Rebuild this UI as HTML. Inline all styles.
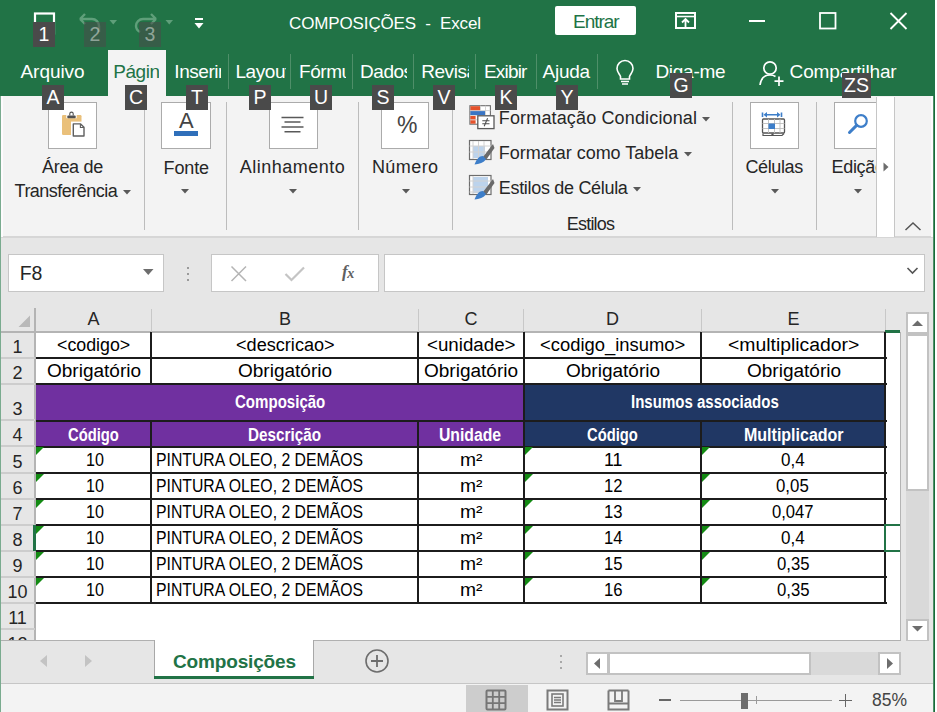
<!DOCTYPE html>
<html><head><meta charset="utf-8"><style>
html,body{margin:0;padding:0;width:937px;height:712px;overflow:hidden;background:#fff}
body{position:relative;font-family:"Liberation Sans",sans-serif}
</style></head><body>
<div style="position:absolute;left:0px;top:0px;width:937px;height:712px;background:#ffffff"></div>
<div style="position:absolute;left:0px;top:0px;width:935px;height:96px;background:#217346"></div>
<div style="position:absolute;left:0px;top:96px;width:935px;height:141px;background:#f3f3f3"></div>
<div style="position:absolute;left:0px;top:236px;width:935px;height:2px;background:#d6d6d6"></div>
<div style="position:absolute;left:0px;top:238px;width:935px;height:403px;background:#e6e6e6"></div>
<div style="position:absolute;left:0px;top:641px;width:935px;height:43px;background:#e6e6e6"></div>
<div style="position:absolute;left:0px;top:684px;width:935px;height:28px;background:#f3f3f3"></div>
<div style="position:absolute;left:0px;top:683px;width:935px;height:1px;background:#c6c6c6"></div>
<svg style="position:absolute;left:30px;top:10px;" width="30" height="30" viewBox="0 0 30 30"><rect x="5" y="3.5" width="19" height="20" fill="none" stroke="#fff" stroke-width="2.2"/></svg>
<div style="position:absolute;left:33px;top:22px;width:22px;height:25px;background:#4a4a4a"></div>
<span style="position:absolute;left:38.60px;top:25.20px;font-size:19.5px;line-height:19.5px;letter-spacing:0.000px;color:#ffffff;white-space:pre;">1</span>
<svg style="position:absolute;left:74px;top:10px;" width="34" height="26" viewBox="0 0 34 26"><path d="M6 9 L11 4 M6 9 L11 14 M6 9 H18 A7 7 0 0 1 25 16 V22" fill="none" stroke="#5f9f7a" stroke-width="2.4"/></svg>
<svg style="position:absolute;left:106px;top:17px;" width="14" height="10" viewBox="0 0 14 10"><path d="M3.5 3 H11 L7.25 7.5Z" fill="#5f9f7a"/></svg>
<svg style="position:absolute;left:128px;top:10px;" width="34" height="26" viewBox="0 0 34 26"><path d="M28 9 L23 4 M28 9 L23 14 M28 9 H15 A7 7 0 0 0 8 16 A7 7 0 0 0 12 22" fill="none" stroke="#5f9f7a" stroke-width="2.4"/></svg>
<svg style="position:absolute;left:162px;top:17px;" width="14" height="10" viewBox="0 0 14 10"><path d="M3.5 3 H11 L7.25 7.5Z" fill="#5f9f7a"/></svg>
<div style="position:absolute;left:84px;top:22px;width:22px;height:25px;background:rgba(75,75,75,0.55)"></div>
<span style="position:absolute;left:89.60px;top:25.20px;font-size:19.5px;line-height:19.5px;letter-spacing:0.000px;color:rgba(255,255,255,0.45);white-space:pre;">2</span>
<div style="position:absolute;left:139px;top:22px;width:22px;height:25px;background:rgba(75,75,75,0.55)"></div>
<span style="position:absolute;left:144.60px;top:25.20px;font-size:19.5px;line-height:19.5px;letter-spacing:0.000px;color:rgba(255,255,255,0.45);white-space:pre;">3</span>
<svg style="position:absolute;left:192px;top:15px;" width="14" height="16" viewBox="0 0 14 16"><rect x="3" y="3" width="8" height="2" fill="#fff"/><path d="M2.5 8 H11.5 L7 13.5Z" fill="#fff"/></svg>
<span style="position:absolute;left:289.00px;top:14.61px;font-size:17px;line-height:17px;letter-spacing:-0.130px;color:#ffffff;white-space:pre;">COMPOSIÇÕES  -  Excel</span>
<div style="position:absolute;left:555px;top:6px;width:81px;height:29px;background:#fff;border-radius:2px"></div>
<span style="position:absolute;left:573.00px;top:12.21px;font-size:19px;line-height:19px;letter-spacing:-1.040px;color:#217346;white-space:pre;">Entrar</span>
<svg style="position:absolute;left:672px;top:9px;" width="28" height="24" viewBox="0 0 28 24"><rect x="4" y="4" width="19" height="15" fill="none" stroke="#fff" stroke-width="2"/><path d="M4 7.5 H23" stroke="#fff" stroke-width="1.6"/><path d="M13.5 18 V10.5 M10 13.5 L13.5 10 L17 13.5" fill="none" stroke="#fff" stroke-width="1.8"/></svg>
<div style="position:absolute;left:749px;top:20px;width:16px;height:2px;background:#fff"></div>
<svg style="position:absolute;left:815px;top:8px;" width="26" height="26" viewBox="0 0 26 26"><rect x="5" y="5" width="15.5" height="15.5" fill="none" stroke="#fff" stroke-width="1.8"/></svg>
<svg style="position:absolute;left:886px;top:8px;" width="26" height="26" viewBox="0 0 26 26"><path d="M4.5 5 L20.5 21 M20.5 5 L4.5 21" stroke="#fff" stroke-width="1.8"/></svg>
<div style="position:absolute;left:108px;top:50px;width:58px;height:46px;background:#f3f3f3"></div>
<span style="position:absolute;left:20.50px;top:62.41px;font-size:19px;line-height:19px;letter-spacing:-0.050px;color:#ffffff;white-space:pre;">Arquivo</span>
<div style="position:absolute;left:0;top:50px;width:159px;height:46px;overflow:hidden">
<span style="position:absolute;left:113.20px;top:12.41px;font-size:19px;line-height:19px;letter-spacing:-0.45px;color:#217346;white-space:pre">Página Inicial</span>
</div>
<div style="position:absolute;left:0;top:50px;width:221px;height:46px;overflow:hidden">
<span style="position:absolute;left:174.30px;top:12.41px;font-size:19px;line-height:19px;letter-spacing:-0.45px;color:#ffffff;white-space:pre">Inserir</span>
</div>
<div style="position:absolute;left:0;top:50px;width:286px;height:46px;overflow:hidden">
<span style="position:absolute;left:235.50px;top:12.41px;font-size:19px;line-height:19px;letter-spacing:-0.45px;color:#ffffff;white-space:pre">Layout da Página</span>
</div>
<div style="position:absolute;left:0;top:50px;width:346px;height:46px;overflow:hidden">
<span style="position:absolute;left:299.00px;top:12.41px;font-size:19px;line-height:19px;letter-spacing:-0.45px;color:#ffffff;white-space:pre">Fórmulas</span>
</div>
<div style="position:absolute;left:0;top:50px;width:407px;height:46px;overflow:hidden">
<span style="position:absolute;left:360.00px;top:12.41px;font-size:19px;line-height:19px;letter-spacing:-0.45px;color:#ffffff;white-space:pre">Dados</span>
</div>
<div style="position:absolute;left:0;top:50px;width:469px;height:46px;overflow:hidden">
<span style="position:absolute;left:421.20px;top:12.41px;font-size:19px;line-height:19px;letter-spacing:-0.45px;color:#ffffff;white-space:pre">Revisão</span>
</div>
<span style="position:absolute;left:484.00px;top:62.41px;font-size:19px;line-height:19px;letter-spacing:-0.820px;color:#ffffff;white-space:pre;">Exibir</span>
<span style="position:absolute;left:542.60px;top:62.41px;font-size:19px;line-height:19px;letter-spacing:-0.300px;color:#ffffff;white-space:pre;">Ajuda</span>
<div style="position:absolute;left:228px;top:54px;width:1px;height:35px;background:#4f8f69"></div>
<div style="position:absolute;left:290px;top:54px;width:1px;height:35px;background:#4f8f69"></div>
<div style="position:absolute;left:352px;top:54px;width:1px;height:35px;background:#4f8f69"></div>
<div style="position:absolute;left:413px;top:54px;width:1px;height:35px;background:#4f8f69"></div>
<div style="position:absolute;left:475px;top:54px;width:1px;height:35px;background:#4f8f69"></div>
<div style="position:absolute;left:536px;top:54px;width:1px;height:35px;background:#4f8f69"></div>
<div style="position:absolute;left:597px;top:54px;width:1px;height:35px;background:#4f8f69"></div>
<svg style="position:absolute;left:610px;top:56px;" width="30" height="32" viewBox="0 0 30 32"><path d="M15 4.5 A8 8 0 0 1 23 12.5 C23 16 20.5 18 19.5 20.5 V23 H10.5 V20.5 C9.5 18 7 16 7 12.5 A8 8 0 0 1 15 4.5Z" fill="none" stroke="#fff" stroke-width="1.6"/><path d="M11 25.5 H19 M12 28 H18" stroke="#fff" stroke-width="1.6"/></svg>
<span style="position:absolute;left:655.40px;top:62.41px;font-size:19px;line-height:19px;letter-spacing:-0.267px;color:#ffffff;white-space:pre;">Diga-me</span>
<svg style="position:absolute;left:756px;top:58px;" width="32" height="30" viewBox="0 0 32 30"><circle cx="14" cy="10" r="6.2" fill="none" stroke="#fff" stroke-width="1.7"/><path d="M4 27 C5 20 9 17 14 17 C16 17 18 17.5 19.5 18.5" fill="none" stroke="#fff" stroke-width="1.7"/><path d="M23 18.5 V28 M18.5 23.2 H27.5" stroke="#fff" stroke-width="1.7"/></svg>
<span style="position:absolute;left:789.60px;top:62.41px;font-size:19px;line-height:19px;letter-spacing:-0.155px;color:#ffffff;white-space:pre;">Compartilhar</span>
<div style="position:absolute;left:144px;top:102px;width:1px;height:128px;background:#bcbcbc"></div>
<div style="position:absolute;left:226px;top:102px;width:1px;height:128px;background:#bcbcbc"></div>
<div style="position:absolute;left:358px;top:102px;width:1px;height:128px;background:#bcbcbc"></div>
<div style="position:absolute;left:452px;top:102px;width:1px;height:128px;background:#bcbcbc"></div>
<div style="position:absolute;left:732px;top:102px;width:1px;height:128px;background:#bcbcbc"></div>
<div style="position:absolute;left:816px;top:102px;width:1px;height:128px;background:#bcbcbc"></div>
<div style="position:absolute;left:48px;top:102px;width:49px;height:47px;background:#fff;border:1px solid #ababab;box-sizing:border-box"></div>
<svg style="position:absolute;left:58px;top:110px;" width="30" height="30" viewBox="0 0 30 30"><rect x="4" y="5" width="19.5" height="20" rx="1.2" fill="#eac07a"/><rect x="8.3" y="4" width="10.4" height="4.2" fill="#fff"/><rect x="9.3" y="5.6" width="8.4" height="2.6" rx="0.8" fill="#505050"/><path d="M11.8 5.6 V3.8 A1.7 1.7 0 0 1 15.2 3.8 V5.6" fill="none" stroke="#505050" stroke-width="1.1"/><rect x="13" y="11.6" width="15" height="17" fill="#fff"/><path d="M15.3 13.9 H22.6 L26 17.3 V26 H15.3Z" fill="#fff" stroke="#5f5f5f" stroke-width="1.4" stroke-linejoin="round"/><path d="M22.4 14 V17.5 H26" fill="none" stroke="#5f5f5f" stroke-width="1.1"/></svg>
<span style="position:absolute;left:42.00px;top:158.36px;font-size:18px;line-height:18px;letter-spacing:-0.300px;color:#262626;white-space:pre;">Área de</span>
<span style="position:absolute;left:14.60px;top:181.56px;font-size:18px;line-height:18px;letter-spacing:-0.525px;color:#262626;white-space:pre;">Transferência</span>
<svg style="position:absolute;left:122.3px;top:189px;" width="10" height="6.5" viewBox="0 0 10 6.5"><path d="M1 1 H9 L5.0 5.5Z" fill="#595959"/></svg>
<div style="position:absolute;left:161px;top:102px;width:50px;height:47px;background:#fff;border:1px solid #ababab;box-sizing:border-box"></div>
<span style="position:absolute;left:179.00px;top:110.37px;font-size:22px;line-height:22px;letter-spacing:0.000px;color:#444444;white-space:pre;">A</span>
<div style="position:absolute;left:174px;top:131px;width:24px;height:5px;background:#2f6fba"></div>
<span style="position:absolute;left:163.60px;top:158.76px;font-size:18px;line-height:18px;letter-spacing:-0.125px;color:#262626;white-space:pre;">Fonte</span>
<svg style="position:absolute;left:180.3px;top:188px;" width="10" height="6.5" viewBox="0 0 10 6.5"><path d="M1 1 H9 L5.0 5.5Z" fill="#595959"/></svg>
<div style="position:absolute;left:269px;top:102px;width:49px;height:47px;background:#fff;border:1px solid #ababab;box-sizing:border-box"></div>
<svg style="position:absolute;left:279px;top:114px;" width="28" height="22" viewBox="0 0 28 22"><path d="M2.5 3.5 H24.5 M5.5 8 H21.5 M2.5 13 H24.5 M5.5 17.8 H21.5" stroke="#595959" stroke-width="1.6"/></svg>
<span style="position:absolute;left:239.80px;top:158.26px;font-size:18px;line-height:18px;letter-spacing:0.500px;color:#262626;white-space:pre;">Alinhamento</span>
<svg style="position:absolute;left:287.6px;top:188px;" width="10" height="6.5" viewBox="0 0 10 6.5"><path d="M1 1 H9 L5.0 5.5Z" fill="#595959"/></svg>
<div style="position:absolute;left:381px;top:102px;width:48px;height:47px;background:#fff;border:1px solid #ababab;box-sizing:border-box"></div>
<span style="position:absolute;left:397.00px;top:114.03px;font-size:23px;line-height:23px;letter-spacing:0.000px;color:#444444;white-space:pre;">%</span>
<span style="position:absolute;left:371.90px;top:158.26px;font-size:18px;line-height:18px;letter-spacing:0.440px;color:#262626;white-space:pre;">Número</span>
<svg style="position:absolute;left:401.1px;top:188px;" width="10" height="6.5" viewBox="0 0 10 6.5"><path d="M1 1 H9 L5.0 5.5Z" fill="#595959"/></svg>
<svg style="position:absolute;left:466px;top:102px;" width="32" height="30" viewBox="0 0 32 30"><rect x="3.9" y="3.7" width="20.5" height="18.5" fill="#fff" stroke="#6d6d6d" stroke-width="1.1"/><path d="M14.5 3.7 V22 M19.5 3.7 V13 M3.9 8.6 H24.4 M3.9 13.4 H24.4 M3.9 17.8 H12" stroke="#cfcfcf" stroke-width="0.9"/><rect x="4.4" y="4.2" width="9.6" height="4" fill="#e5512a"/><rect x="4.4" y="9.1" width="14.6" height="3.9" fill="#3a75c4"/><rect x="4.4" y="14" width="5.2" height="3.4" fill="#e5512a"/><rect x="4.4" y="18.3" width="5.2" height="3.4" fill="#e5512a"/><rect x="11.8" y="13.8" width="16.2" height="12.8" fill="#fff" stroke="#5a5a5a" stroke-width="1.3"/><path d="M16.3 18.8 H23.5 M16.3 21.8 H23.5 M21.6 16.3 L18.2 24.3" stroke="#505050" stroke-width="1.1"/></svg>
<svg style="position:absolute;left:466px;top:137px;" width="32" height="30" viewBox="0 0 32 30"><rect x="3.5" y="3.5" width="21.5" height="19" fill="#fff" stroke="#6d6d6d" stroke-width="1.2"/><rect x="7" y="9" width="12" height="12" fill="#bcd3ec"/><path d="M7 4 V22 M12.5 4 V22 M18 4 V22 M3.5 9 H25 M3.5 15 H25" stroke="#d2d2d2" stroke-width="1"/><path d="M27 7 L17 20 L20 23 L28.5 11Z" fill="#6a6a6a"/><path d="M17 19 C12 19 10 24 8.5 27.5 C13 27 18 26 20 22Z" fill="#3d7ec9"/></svg>
<svg style="position:absolute;left:466px;top:172px;" width="32" height="30" viewBox="0 0 32 30"><rect x="3.5" y="3.5" width="21.5" height="19" fill="#fff" stroke="#6d6d6d" stroke-width="1.2"/><rect x="7" y="5" width="15" height="16" fill="#bcd3ec"/><path d="M7 4 V22 M3.5 9 H25 M3.5 15 H22 M3.5 20 H20" stroke="#d2d2d2" stroke-width="1"/><path d="M27 7 L17 20 L20 23 L28.5 11Z" fill="#6a6a6a"/><path d="M17 19 C12 19 10 24 8.5 27.5 C13 27 18 26 20 22Z" fill="#3d7ec9"/></svg>
<span style="position:absolute;left:498.80px;top:109.46px;font-size:18px;line-height:18px;letter-spacing:0.148px;color:#262626;white-space:pre;">Formatação Condicional</span>
<svg style="position:absolute;left:701.4px;top:115.5px;" width="10" height="6.5" viewBox="0 0 10 6.5"><path d="M1 1 H9 L5.0 5.5Z" fill="#595959"/></svg>
<span style="position:absolute;left:498.80px;top:143.76px;font-size:18px;line-height:18px;letter-spacing:-0.016px;color:#262626;white-space:pre;">Formatar como Tabela</span>
<svg style="position:absolute;left:682.6px;top:151px;" width="10" height="6.5" viewBox="0 0 10 6.5"><path d="M1 1 H9 L5.0 5.5Z" fill="#595959"/></svg>
<span style="position:absolute;left:498.80px;top:179.16px;font-size:18px;line-height:18px;letter-spacing:-0.312px;color:#262626;white-space:pre;">Estilos de Célula</span>
<svg style="position:absolute;left:632.3px;top:186px;" width="10" height="6.5" viewBox="0 0 10 6.5"><path d="M1 1 H9 L5.0 5.5Z" fill="#595959"/></svg>
<span style="position:absolute;left:566.80px;top:214.66px;font-size:18px;line-height:18px;letter-spacing:-0.800px;color:#262626;white-space:pre;">Estilos</span>
<div style="position:absolute;left:750px;top:102px;width:49px;height:47px;background:#fff;border:1px solid #ababab;box-sizing:border-box"></div>
<svg style="position:absolute;left:758px;top:110px;" width="32" height="30" viewBox="0 0 32 30"><path d="M4.5 2.5 V7 M23.5 2.5 V7 M7 4.75 H21" stroke="#3d7ec9" stroke-width="1.6"/><path d="M5.5 4.75 L9 2 V7.5Z M22.5 4.75 L19 2 V7.5Z" fill="#3d7ec9"/><rect x="4.5" y="9" width="22" height="14" rx="1" fill="#fff" stroke="#555" stroke-width="1.3"/><path d="M10.5 9 V23 M16.5 9 V23 M22 9 V23 M4.5 13.5 H26.5 M4.5 18.5 H26.5" stroke="#bdbdbd" stroke-width="0.9"/><rect x="10.5" y="13.5" width="6.5" height="5.5" fill="#3d7ec9"/><path d="M5 23.5 V25.5 H14 V23.5 M15 23.5 V25.5 H24 L26 23.5" fill="none" stroke="#555" stroke-width="1.2"/></svg>
<span style="position:absolute;left:745.50px;top:157.76px;font-size:18px;line-height:18px;letter-spacing:-0.383px;color:#262626;white-space:pre;">Células</span>
<svg style="position:absolute;left:769.8px;top:188px;" width="10" height="6.5" viewBox="0 0 10 6.5"><path d="M1 1 H9 L5.0 5.5Z" fill="#595959"/></svg>
<div style="position:absolute;left:820px;top:96px;width:56px;height:140px;overflow:hidden">
<div style="position:absolute;left:14px;top:6px;width:49px;height:47px;background:#fff;border:1px solid #ababab;box-sizing:border-box"></div>
<svg style="position:absolute;left:24px;top:16px" width="30" height="26" viewBox="0 0 30 26"><circle cx="17" cy="9" r="5.8" fill="none" stroke="#3d7ec9" stroke-width="2.2"/><path d="M12.6 13.4 L5.5 20.5" stroke="#3d7ec9" stroke-width="3" stroke-linecap="round"/></svg>
<span style="position:absolute;left:11.50px;top:62.06px;font-size:18px;line-height:18px;letter-spacing:-0.3px;color:#262626;white-space:pre">Edição</span>
</div>
<svg style="position:absolute;left:852.8px;top:188px;" width="10" height="6.5" viewBox="0 0 10 6.5"><path d="M1 1 H9 L5.0 5.5Z" fill="#595959"/></svg>
<div style="position:absolute;left:876px;top:97px;width:19px;height:140px;background:#fff;border-left:1px solid #c6c6c6;border-right:1px solid #c6c6c6;box-sizing:border-box"></div>
<svg style="position:absolute;left:881px;top:161px;" width="10" height="12" viewBox="0 0 10 12"><path d="M2.5 1.5 V10.5 L7.5 6Z" fill="#6d6d6d"/></svg>
<svg style="position:absolute;left:903px;top:220px;" width="20" height="12" viewBox="0 0 20 12"><path d="M2.5 10 L10 3 L17.5 10" fill="none" stroke="#555" stroke-width="1.5"/></svg>
<div style="position:absolute;left:42px;top:85px;width:22px;height:25px;background:#4a4a4a"></div>
<span style="position:absolute;left:46.50px;top:88.20px;font-size:19.5px;line-height:19.5px;letter-spacing:0.000px;color:#ffffff;white-space:pre;">A</span>
<div style="position:absolute;left:125px;top:85px;width:22px;height:25px;background:#4a4a4a"></div>
<span style="position:absolute;left:128.95px;top:88.20px;font-size:19.5px;line-height:19.5px;letter-spacing:0.000px;color:#ffffff;white-space:pre;">C</span>
<div style="position:absolute;left:186px;top:85px;width:22px;height:25px;background:#4a4a4a"></div>
<span style="position:absolute;left:191.05px;top:88.20px;font-size:19.5px;line-height:19.5px;letter-spacing:0.000px;color:#ffffff;white-space:pre;">T</span>
<div style="position:absolute;left:249px;top:85px;width:22px;height:25px;background:#4a4a4a"></div>
<span style="position:absolute;left:253.50px;top:88.20px;font-size:19.5px;line-height:19.5px;letter-spacing:0.000px;color:#ffffff;white-space:pre;">P</span>
<div style="position:absolute;left:310px;top:85px;width:22px;height:25px;background:#4a4a4a"></div>
<span style="position:absolute;left:313.95px;top:88.20px;font-size:19.5px;line-height:19.5px;letter-spacing:0.000px;color:#ffffff;white-space:pre;">U</span>
<div style="position:absolute;left:372px;top:85px;width:22px;height:25px;background:#4a4a4a"></div>
<span style="position:absolute;left:376.50px;top:88.20px;font-size:19.5px;line-height:19.5px;letter-spacing:0.000px;color:#ffffff;white-space:pre;">S</span>
<div style="position:absolute;left:433px;top:85px;width:22px;height:25px;background:#4a4a4a"></div>
<span style="position:absolute;left:437.50px;top:88.20px;font-size:19.5px;line-height:19.5px;letter-spacing:0.000px;color:#ffffff;white-space:pre;">V</span>
<div style="position:absolute;left:495px;top:85px;width:22px;height:25px;background:#4a4a4a"></div>
<span style="position:absolute;left:499.50px;top:88.20px;font-size:19.5px;line-height:19.5px;letter-spacing:0.000px;color:#ffffff;white-space:pre;">K</span>
<div style="position:absolute;left:556px;top:85px;width:22px;height:25px;background:#4a4a4a"></div>
<span style="position:absolute;left:560.50px;top:88.20px;font-size:19.5px;line-height:19.5px;letter-spacing:0.000px;color:#ffffff;white-space:pre;">Y</span>
<div style="position:absolute;left:670px;top:73px;width:22px;height:25px;background:#4a4a4a"></div>
<span style="position:absolute;left:673.40px;top:76.20px;font-size:19.5px;line-height:19.5px;letter-spacing:0.000px;color:#ffffff;white-space:pre;">G</span>
<div style="position:absolute;left:842px;top:73px;width:29px;height:25px;background:#4a4a4a"></div>
<span style="position:absolute;left:844.05px;top:76.20px;font-size:19.5px;line-height:19.5px;letter-spacing:0.000px;color:#ffffff;white-space:pre;">ZS</span>
<div style="position:absolute;left:8px;top:254px;width:156px;height:38px;background:#fff;border:1px solid #c6c6c6;box-sizing:border-box"></div>
<span style="position:absolute;left:19.70px;top:264.49px;font-size:19.5px;line-height:19.5px;letter-spacing:0.000px;color:#262626;white-space:pre;">F8</span>
<svg style="position:absolute;left:142.05px;top:267.5px;" width="12.5" height="8" viewBox="0 0 12.5 8"><path d="M1 1 H11.5 L6.25 7Z" fill="#6d6d6d"/></svg>
<div style="position:absolute;left:187px;top:267px;width:2px;height:2px;background:#9a9a9a"></div>
<div style="position:absolute;left:187px;top:273px;width:2px;height:2px;background:#9a9a9a"></div>
<div style="position:absolute;left:187px;top:279px;width:2px;height:2px;background:#9a9a9a"></div>
<div style="position:absolute;left:211px;top:254px;width:168px;height:38px;background:#fff;border:1px solid #c6c6c6;box-sizing:border-box"></div>
<svg style="position:absolute;left:228px;top:263px;" width="24" height="22" viewBox="0 0 24 22"><path d="M3.5 3.5 L18 18 M18 3.5 L3.5 18" stroke="#b4b4b4" stroke-width="1.5"/></svg>
<svg style="position:absolute;left:282px;top:263px;" width="26" height="22" viewBox="0 0 26 22"><path d="M3.5 11 L9.5 17 L22 4.5" fill="none" stroke="#c4c4c4" stroke-width="2.2"/></svg>
<span style="position:absolute;left:342px;top:263px;font-family:'Liberation Serif',serif;font-style:italic;font-weight:bold;font-size:17px;line-height:17px;color:#606060;letter-spacing:-0.5px">f<span style="font-size:14px;position:relative;top:1px">x</span></span>
<div style="position:absolute;left:384px;top:254px;width:541px;height:38px;background:#fff;border:1px solid #c6c6c6;box-sizing:border-box"></div>
<svg style="position:absolute;left:905px;top:264px;" width="16" height="14" viewBox="0 0 16 14"><path d="M2.5 4 L7.5 9 L12.5 4" fill="none" stroke="#555" stroke-width="1.6"/></svg>
<div style="position:absolute;left:36px;top:333px;width:864px;height:308px;background:#fff"></div>
<div style="position:absolute;left:0px;top:308px;width:900px;height:24px;background:#e6e6e6"></div>
<div style="position:absolute;left:1px;top:332px;width:34px;height:309px;background:#e6e6e6"></div>
<div style="position:absolute;left:0px;top:331px;width:900px;height:2px;background:#b4b4b4"></div>
<div style="position:absolute;left:34px;top:308px;width:2px;height:333px;background:#b4b4b4"></div>
<div style="position:absolute;left:151px;top:309px;width:1px;height:23px;background:#c8c8c8"></div>
<div style="position:absolute;left:418px;top:309px;width:1px;height:23px;background:#c8c8c8"></div>
<div style="position:absolute;left:523px;top:309px;width:1px;height:23px;background:#c8c8c8"></div>
<div style="position:absolute;left:701px;top:309px;width:1px;height:23px;background:#c8c8c8"></div>
<div style="position:absolute;left:885px;top:309px;width:1px;height:23px;background:#c8c8c8"></div>
<div style="position:absolute;left:1px;top:357px;width:34px;height:2px;background:#cdcdcd"></div>
<div style="position:absolute;left:1px;top:383px;width:34px;height:2px;background:#cdcdcd"></div>
<div style="position:absolute;left:1px;top:419px;width:34px;height:2px;background:#cdcdcd"></div>
<div style="position:absolute;left:1px;top:445px;width:34px;height:2px;background:#cdcdcd"></div>
<div style="position:absolute;left:1px;top:472px;width:34px;height:2px;background:#cdcdcd"></div>
<div style="position:absolute;left:1px;top:498px;width:34px;height:2px;background:#cdcdcd"></div>
<div style="position:absolute;left:1px;top:524px;width:34px;height:2px;background:#cdcdcd"></div>
<div style="position:absolute;left:1px;top:550px;width:34px;height:2px;background:#cdcdcd"></div>
<div style="position:absolute;left:1px;top:576px;width:34px;height:2px;background:#cdcdcd"></div>
<div style="position:absolute;left:1px;top:602px;width:34px;height:2px;background:#cdcdcd"></div>
<div style="position:absolute;left:1px;top:628px;width:34px;height:2px;background:#cdcdcd"></div>
<svg style="position:absolute;left:16px;top:313px;" width="16" height="16" viewBox="0 0 16 16"><path d="M14 2.5 V14 H2.5Z" fill="#b9b9b9"/></svg>
<span style="position:absolute;left:87.50px;top:310.36px;font-size:18px;line-height:18px;letter-spacing:0.000px;color:#262626;white-space:pre;">A</span>
<span style="position:absolute;left:279.00px;top:310.36px;font-size:18px;line-height:18px;letter-spacing:0.000px;color:#262626;white-space:pre;">B</span>
<span style="position:absolute;left:464.50px;top:310.36px;font-size:18px;line-height:18px;letter-spacing:0.000px;color:#262626;white-space:pre;">C</span>
<span style="position:absolute;left:606.00px;top:310.36px;font-size:18px;line-height:18px;letter-spacing:0.000px;color:#262626;white-space:pre;">D</span>
<span style="position:absolute;left:787.50px;top:310.36px;font-size:18px;line-height:18px;letter-spacing:0.000px;color:#262626;white-space:pre;">E</span>
<div style="position:absolute;left:885px;top:330px;width:15px;height:3px;background:#217346"></div>
<span style="position:absolute;left:12.50px;top:337.56px;font-size:18px;line-height:18px;letter-spacing:0.000px;color:#262626;white-space:pre;">1</span>
<span style="position:absolute;left:12.50px;top:363.76px;font-size:18px;line-height:18px;letter-spacing:0.000px;color:#262626;white-space:pre;">2</span>
<span style="position:absolute;left:12.50px;top:400.06px;font-size:18px;line-height:18px;letter-spacing:0.000px;color:#262626;white-space:pre;">3</span>
<span style="position:absolute;left:12.50px;top:426.06px;font-size:18px;line-height:18px;letter-spacing:0.000px;color:#262626;white-space:pre;">4</span>
<span style="position:absolute;left:12.50px;top:452.56px;font-size:18px;line-height:18px;letter-spacing:0.000px;color:#262626;white-space:pre;">5</span>
<span style="position:absolute;left:12.50px;top:478.56px;font-size:18px;line-height:18px;letter-spacing:0.000px;color:#262626;white-space:pre;">6</span>
<span style="position:absolute;left:12.50px;top:504.56px;font-size:18px;line-height:18px;letter-spacing:0.000px;color:#262626;white-space:pre;">7</span>
<span style="position:absolute;left:12.50px;top:530.56px;font-size:18px;line-height:18px;letter-spacing:0.000px;color:#262626;white-space:pre;">8</span>
<span style="position:absolute;left:12.50px;top:556.56px;font-size:18px;line-height:18px;letter-spacing:0.000px;color:#262626;white-space:pre;">9</span>
<span style="position:absolute;left:7.50px;top:582.76px;font-size:18px;line-height:18px;letter-spacing:0.000px;color:#262626;white-space:pre;">10</span>
<span style="position:absolute;left:8.15px;top:608.76px;font-size:18px;line-height:18px;letter-spacing:0.000px;color:#262626;white-space:pre;">11</span>
<span style="position:absolute;left:7.50px;top:634.56px;font-size:18px;line-height:18px;letter-spacing:0.000px;color:#262626;white-space:pre;">12</span>
<div style="position:absolute;left:33px;top:525px;width:3px;height:26px;background:#217346"></div>
<div style="position:absolute;left:36px;top:385px;width:488px;height:62px;background:#7030a0"></div>
<div style="position:absolute;left:524px;top:385px;width:362px;height:62px;background:#203764"></div>
<div style="position:absolute;left:150px;top:332px;width:2px;height:272px;background:#1c1c1c"></div>
<div style="position:absolute;left:417px;top:332px;width:2px;height:272px;background:#1c1c1c"></div>
<div style="position:absolute;left:523px;top:332px;width:2px;height:272px;background:#1c1c1c"></div>
<div style="position:absolute;left:700px;top:332px;width:2px;height:272px;background:#1c1c1c"></div>
<div style="position:absolute;left:884px;top:332px;width:2px;height:272px;background:#1c1c1c"></div>
<div style="position:absolute;left:36px;top:357px;width:851px;height:2px;background:#1c1c1c"></div>
<div style="position:absolute;left:36px;top:383px;width:851px;height:2px;background:#1c1c1c"></div>
<div style="position:absolute;left:36px;top:420px;width:851px;height:2px;background:#1c1c1c"></div>
<div style="position:absolute;left:36px;top:446px;width:851px;height:2px;background:#1c1c1c"></div>
<div style="position:absolute;left:36px;top:472px;width:851px;height:2px;background:#1c1c1c"></div>
<div style="position:absolute;left:36px;top:498px;width:851px;height:2px;background:#1c1c1c"></div>
<div style="position:absolute;left:36px;top:524px;width:851px;height:2px;background:#1c1c1c"></div>
<div style="position:absolute;left:36px;top:550px;width:851px;height:2px;background:#1c1c1c"></div>
<div style="position:absolute;left:36px;top:576px;width:851px;height:2px;background:#1c1c1c"></div>
<div style="position:absolute;left:36px;top:602px;width:851px;height:2px;background:#1c1c1c"></div>
<div style="position:absolute;left:36px;top:385px;width:486px;height:35px;background:#7030a0"></div>
<div style="position:absolute;left:525px;top:385px;width:359px;height:35px;background:#203764"></div>
<div style="position:absolute;left:884px;top:524px;width:16px;height:2px;background:#217346"></div>
<div style="position:absolute;left:884px;top:550px;width:16px;height:2px;background:#217346"></div>
<div style="position:absolute;left:884px;top:524px;width:2px;height:28px;background:#217346"></div>
<svg style="position:absolute;left:525px;top:447px;" width="9" height="9" viewBox="0 0 9 9"><path d="M0 0 H8 L0 8Z" fill="#138a13"/></svg>
<svg style="position:absolute;left:702px;top:447px;" width="9" height="9" viewBox="0 0 9 9"><path d="M0 0 H8 L0 8Z" fill="#138a13"/></svg>
<svg style="position:absolute;left:36px;top:447px;" width="9" height="9" viewBox="0 0 9 9"><path d="M0 0 H8 L0 8Z" fill="#138a13"/></svg>
<svg style="position:absolute;left:525px;top:474px;" width="9" height="9" viewBox="0 0 9 9"><path d="M0 0 H8 L0 8Z" fill="#138a13"/></svg>
<svg style="position:absolute;left:702px;top:474px;" width="9" height="9" viewBox="0 0 9 9"><path d="M0 0 H8 L0 8Z" fill="#138a13"/></svg>
<svg style="position:absolute;left:36px;top:474px;" width="9" height="9" viewBox="0 0 9 9"><path d="M0 0 H8 L0 8Z" fill="#138a13"/></svg>
<svg style="position:absolute;left:525px;top:500px;" width="9" height="9" viewBox="0 0 9 9"><path d="M0 0 H8 L0 8Z" fill="#138a13"/></svg>
<svg style="position:absolute;left:702px;top:500px;" width="9" height="9" viewBox="0 0 9 9"><path d="M0 0 H8 L0 8Z" fill="#138a13"/></svg>
<svg style="position:absolute;left:36px;top:500px;" width="9" height="9" viewBox="0 0 9 9"><path d="M0 0 H8 L0 8Z" fill="#138a13"/></svg>
<svg style="position:absolute;left:525px;top:526px;" width="9" height="9" viewBox="0 0 9 9"><path d="M0 0 H8 L0 8Z" fill="#138a13"/></svg>
<svg style="position:absolute;left:702px;top:526px;" width="9" height="9" viewBox="0 0 9 9"><path d="M0 0 H8 L0 8Z" fill="#138a13"/></svg>
<svg style="position:absolute;left:36px;top:526px;" width="9" height="9" viewBox="0 0 9 9"><path d="M0 0 H8 L0 8Z" fill="#138a13"/></svg>
<svg style="position:absolute;left:525px;top:552px;" width="9" height="9" viewBox="0 0 9 9"><path d="M0 0 H8 L0 8Z" fill="#138a13"/></svg>
<svg style="position:absolute;left:702px;top:552px;" width="9" height="9" viewBox="0 0 9 9"><path d="M0 0 H8 L0 8Z" fill="#138a13"/></svg>
<svg style="position:absolute;left:36px;top:552px;" width="9" height="9" viewBox="0 0 9 9"><path d="M0 0 H8 L0 8Z" fill="#138a13"/></svg>
<svg style="position:absolute;left:525px;top:578px;" width="9" height="9" viewBox="0 0 9 9"><path d="M0 0 H8 L0 8Z" fill="#138a13"/></svg>
<svg style="position:absolute;left:702px;top:578px;" width="9" height="9" viewBox="0 0 9 9"><path d="M0 0 H8 L0 8Z" fill="#138a13"/></svg>
<svg style="position:absolute;left:36px;top:578px;" width="9" height="9" viewBox="0 0 9 9"><path d="M0 0 H8 L0 8Z" fill="#138a13"/></svg>
<span style="position:absolute;left:57.40px;top:336.16px;font-size:18px;line-height:18px;letter-spacing:0.000px;transform:scaleX(0.9879);transform-origin:0 0;color:#000000;white-space:pre;">&lt;codigo&gt;</span>
<span style="position:absolute;left:236.00px;top:336.16px;font-size:18px;line-height:18px;letter-spacing:0.000px;transform:scaleX(1.0061);transform-origin:0 0;color:#000000;white-space:pre;">&lt;descricao&gt;</span>
<span style="position:absolute;left:426.60px;top:336.16px;font-size:18px;line-height:18px;letter-spacing:0.000px;transform:scaleX(1.0400);transform-origin:0 0;color:#000000;white-space:pre;">&lt;unidade&gt;</span>
<span style="position:absolute;left:540.40px;top:336.16px;font-size:18px;line-height:18px;letter-spacing:0.000px;transform:scaleX(1.0218);transform-origin:0 0;color:#000000;white-space:pre;">&lt;codigo_insumo&gt;</span>
<span style="position:absolute;left:728.30px;top:336.16px;font-size:18px;line-height:18px;letter-spacing:0.000px;transform:scaleX(1.0762);transform-origin:0 0;color:#000000;white-space:pre;">&lt;multiplicador&gt;</span>
<span style="position:absolute;left:46.75px;top:362.26px;font-size:18px;line-height:18px;letter-spacing:0.000px;transform:scaleX(1.0562);transform-origin:0 0;color:#000000;white-space:pre;">Obrigatório</span>
<span style="position:absolute;left:237.90px;top:362.26px;font-size:18px;line-height:18px;letter-spacing:0.000px;transform:scaleX(1.0562);transform-origin:0 0;color:#000000;white-space:pre;">Obrigatório</span>
<span style="position:absolute;left:424.00px;top:362.26px;font-size:18px;line-height:18px;letter-spacing:0.000px;transform:scaleX(1.0562);transform-origin:0 0;color:#000000;white-space:pre;">Obrigatório</span>
<span style="position:absolute;left:565.50px;top:362.26px;font-size:18px;line-height:18px;letter-spacing:0.000px;transform:scaleX(1.0562);transform-origin:0 0;color:#000000;white-space:pre;">Obrigatório</span>
<span style="position:absolute;left:746.50px;top:362.26px;font-size:18px;line-height:18px;letter-spacing:0.000px;transform:scaleX(1.0562);transform-origin:0 0;color:#000000;white-space:pre;">Obrigatório</span>
<span style="position:absolute;left:234.70px;top:392.76px;font-size:18px;line-height:18px;font-weight:bold;letter-spacing:0.000px;transform:scaleX(0.8361);transform-origin:0 0;color:#ffffff;white-space:pre;">Composição</span>
<span style="position:absolute;left:630.50px;top:392.76px;font-size:18px;line-height:18px;font-weight:bold;letter-spacing:0.000px;transform:scaleX(0.8346);transform-origin:0 0;color:#ffffff;white-space:pre;">Insumos associados</span>
<span style="position:absolute;left:67.80px;top:426.06px;font-size:18px;line-height:18px;font-weight:bold;letter-spacing:0.000px;transform:scaleX(0.8210);transform-origin:0 0;color:#ffffff;white-space:pre;">Código</span>
<span style="position:absolute;left:247.50px;top:426.06px;font-size:18px;line-height:18px;font-weight:bold;letter-spacing:0.000px;transform:scaleX(0.8479);transform-origin:0 0;color:#ffffff;white-space:pre;">Descrição</span>
<span style="position:absolute;left:439.30px;top:426.06px;font-size:18px;line-height:18px;font-weight:bold;letter-spacing:0.000px;transform:scaleX(0.8746);transform-origin:0 0;color:#ffffff;white-space:pre;">Unidade</span>
<span style="position:absolute;left:587.20px;top:426.06px;font-size:18px;line-height:18px;font-weight:bold;letter-spacing:0.000px;transform:scaleX(0.8194);transform-origin:0 0;color:#ffffff;white-space:pre;">Código</span>
<span style="position:absolute;left:743.90px;top:426.06px;font-size:18px;line-height:18px;font-weight:bold;letter-spacing:0.000px;transform:scaleX(0.8893);transform-origin:0 0;color:#ffffff;white-space:pre;">Multiplicador</span>
<span style="position:absolute;left:85.70px;top:451.26px;font-size:18px;line-height:18px;letter-spacing:0.000px;transform:scaleX(0.8950);transform-origin:0 0;color:#000000;white-space:pre;">10</span>
<span style="position:absolute;left:156.00px;top:451.26px;font-size:18px;line-height:18px;letter-spacing:0.000px;transform:scaleX(0.8767);transform-origin:0 0;color:#000000;white-space:pre;">PINTURA OLEO, 2 DEMÃOS</span>
<span style="position:absolute;left:460.00px;top:451.26px;font-size:18px;line-height:18px;letter-spacing:0.000px;transform:scaleX(1.0714);transform-origin:0 0;color:#000000;white-space:pre;">m²</span>
<span style="position:absolute;left:604.15px;top:451.26px;font-size:18px;line-height:18px;letter-spacing:0.000px;transform:scaleX(0.9893);transform-origin:0 0;color:#000000;white-space:pre;">11</span>
<span style="position:absolute;left:781.00px;top:451.26px;font-size:18px;line-height:18px;letter-spacing:0.000px;transform:scaleX(0.9440);transform-origin:0 0;color:#000000;white-space:pre;">0,4</span>
<span style="position:absolute;left:85.70px;top:477.26px;font-size:18px;line-height:18px;letter-spacing:0.000px;transform:scaleX(0.8950);transform-origin:0 0;color:#000000;white-space:pre;">10</span>
<span style="position:absolute;left:156.00px;top:477.26px;font-size:18px;line-height:18px;letter-spacing:0.000px;transform:scaleX(0.8767);transform-origin:0 0;color:#000000;white-space:pre;">PINTURA OLEO, 2 DEMÃOS</span>
<span style="position:absolute;left:460.00px;top:477.26px;font-size:18px;line-height:18px;letter-spacing:0.000px;transform:scaleX(1.0714);transform-origin:0 0;color:#000000;white-space:pre;">m²</span>
<span style="position:absolute;left:604.15px;top:477.26px;font-size:18px;line-height:18px;letter-spacing:0.000px;transform:scaleX(0.9250);transform-origin:0 0;color:#000000;white-space:pre;">12</span>
<span style="position:absolute;left:776.45px;top:477.26px;font-size:18px;line-height:18px;letter-spacing:0.000px;transform:scaleX(0.9343);transform-origin:0 0;color:#000000;white-space:pre;">0,05</span>
<span style="position:absolute;left:85.70px;top:503.26px;font-size:18px;line-height:18px;letter-spacing:0.000px;transform:scaleX(0.8950);transform-origin:0 0;color:#000000;white-space:pre;">10</span>
<span style="position:absolute;left:156.00px;top:503.26px;font-size:18px;line-height:18px;letter-spacing:0.000px;transform:scaleX(0.8767);transform-origin:0 0;color:#000000;white-space:pre;">PINTURA OLEO, 2 DEMÃOS</span>
<span style="position:absolute;left:460.00px;top:503.26px;font-size:18px;line-height:18px;letter-spacing:0.000px;transform:scaleX(1.0714);transform-origin:0 0;color:#000000;white-space:pre;">m²</span>
<span style="position:absolute;left:604.15px;top:503.26px;font-size:18px;line-height:18px;letter-spacing:0.000px;transform:scaleX(0.9250);transform-origin:0 0;color:#000000;white-space:pre;">13</span>
<span style="position:absolute;left:772.05px;top:503.26px;font-size:18px;line-height:18px;letter-spacing:0.000px;transform:scaleX(0.9222);transform-origin:0 0;color:#000000;white-space:pre;">0,047</span>
<span style="position:absolute;left:85.70px;top:529.26px;font-size:18px;line-height:18px;letter-spacing:0.000px;transform:scaleX(0.8950);transform-origin:0 0;color:#000000;white-space:pre;">10</span>
<span style="position:absolute;left:156.00px;top:529.26px;font-size:18px;line-height:18px;letter-spacing:0.000px;transform:scaleX(0.8767);transform-origin:0 0;color:#000000;white-space:pre;">PINTURA OLEO, 2 DEMÃOS</span>
<span style="position:absolute;left:460.00px;top:529.26px;font-size:18px;line-height:18px;letter-spacing:0.000px;transform:scaleX(1.0714);transform-origin:0 0;color:#000000;white-space:pre;">m²</span>
<span style="position:absolute;left:604.15px;top:529.26px;font-size:18px;line-height:18px;letter-spacing:0.000px;transform:scaleX(0.9250);transform-origin:0 0;color:#000000;white-space:pre;">14</span>
<span style="position:absolute;left:781.00px;top:529.26px;font-size:18px;line-height:18px;letter-spacing:0.000px;transform:scaleX(0.9440);transform-origin:0 0;color:#000000;white-space:pre;">0,4</span>
<span style="position:absolute;left:85.70px;top:555.26px;font-size:18px;line-height:18px;letter-spacing:0.000px;transform:scaleX(0.8950);transform-origin:0 0;color:#000000;white-space:pre;">10</span>
<span style="position:absolute;left:156.00px;top:555.26px;font-size:18px;line-height:18px;letter-spacing:0.000px;transform:scaleX(0.8767);transform-origin:0 0;color:#000000;white-space:pre;">PINTURA OLEO, 2 DEMÃOS</span>
<span style="position:absolute;left:460.00px;top:555.26px;font-size:18px;line-height:18px;letter-spacing:0.000px;transform:scaleX(1.0714);transform-origin:0 0;color:#000000;white-space:pre;">m²</span>
<span style="position:absolute;left:604.15px;top:555.26px;font-size:18px;line-height:18px;letter-spacing:0.000px;transform:scaleX(0.9250);transform-origin:0 0;color:#000000;white-space:pre;">15</span>
<span style="position:absolute;left:776.55px;top:555.26px;font-size:18px;line-height:18px;letter-spacing:0.000px;transform:scaleX(0.9286);transform-origin:0 0;color:#000000;white-space:pre;">0,35</span>
<span style="position:absolute;left:85.70px;top:581.26px;font-size:18px;line-height:18px;letter-spacing:0.000px;transform:scaleX(0.8950);transform-origin:0 0;color:#000000;white-space:pre;">10</span>
<span style="position:absolute;left:156.00px;top:581.26px;font-size:18px;line-height:18px;letter-spacing:0.000px;transform:scaleX(0.8767);transform-origin:0 0;color:#000000;white-space:pre;">PINTURA OLEO, 2 DEMÃOS</span>
<span style="position:absolute;left:460.00px;top:581.26px;font-size:18px;line-height:18px;letter-spacing:0.000px;transform:scaleX(1.0714);transform-origin:0 0;color:#000000;white-space:pre;">m²</span>
<span style="position:absolute;left:604.15px;top:581.26px;font-size:18px;line-height:18px;letter-spacing:0.000px;transform:scaleX(0.9250);transform-origin:0 0;color:#000000;white-space:pre;">16</span>
<span style="position:absolute;left:776.55px;top:581.26px;font-size:18px;line-height:18px;letter-spacing:0.000px;transform:scaleX(0.9286);transform-origin:0 0;color:#000000;white-space:pre;">0,35</span>
<div style="position:absolute;left:900px;top:332px;width:1px;height:309px;background:#b4b4b4"></div>
<div style="position:absolute;left:901px;top:308px;width:32px;height:333px;background:#e6e6e6"></div>
<div style="position:absolute;left:906px;top:334px;width:23px;height:285px;background:#d9d9d9"></div>
<div style="position:absolute;left:906px;top:312px;width:23px;height:22px;background:#fff;border:2px solid #c2c2c2;box-sizing:border-box"></div>
<svg style="position:absolute;left:910px;top:316px;" width="15" height="14" viewBox="0 0 15 14"><path d="M2 10 L7.5 4.5 L13 10Z" fill="#6d6d6d"/></svg>
<div style="position:absolute;left:906px;top:334px;width:23px;height:157px;background:#fff;border:2px solid #c2c2c2;box-sizing:border-box"></div>
<div style="position:absolute;left:906px;top:619px;width:23px;height:23px;background:#fff;border:2px solid #c2c2c2;box-sizing:border-box"></div>
<svg style="position:absolute;left:910px;top:622px;" width="15" height="14" viewBox="0 0 15 14"><path d="M2 4 L7.5 9.5 L13 4Z" fill="#6d6d6d"/></svg>
<div style="position:absolute;left:1px;top:641px;width:932px;height:42px;background:#e6e6e6"></div>
<div style="position:absolute;left:1px;top:683px;width:932px;height:1px;background:#c6c6c6"></div>
<div style="position:absolute;left:0px;top:640px;width:155px;height:1px;background:#b0b0b0"></div>
<div style="position:absolute;left:313px;top:640px;width:588px;height:1px;background:#b0b0b0"></div>
<svg style="position:absolute;left:36px;top:652px;" width="16" height="18" viewBox="0 0 16 18"><path d="M11 3 V15 L4 9Z" fill="#c3c3c3"/></svg>
<svg style="position:absolute;left:80px;top:652px;" width="16" height="18" viewBox="0 0 16 18"><path d="M5 3 V15 L12 9Z" fill="#c3c3c3"/></svg>
<div style="position:absolute;left:154px;top:640px;width:160px;height:39px;background:#fff;border-left:1px solid #a8a8a8;border-right:1px solid #a8a8a8;box-sizing:border-box"></div>
<div style="position:absolute;left:154px;top:676px;width:160px;height:3px;background:#217346"></div>
<span style="position:absolute;left:173.00px;top:652.41px;font-size:19px;line-height:19px;font-weight:bold;letter-spacing:-0.160px;color:#217346;white-space:pre;">Composições</span>
<svg style="position:absolute;left:363px;top:647px;" width="28" height="28" viewBox="0 0 28 28"><circle cx="14" cy="14" r="11" fill="none" stroke="#6d6d6d" stroke-width="1.6"/><path d="M14 8 V20 M8 14 H20" stroke="#6d6d6d" stroke-width="1.8"/></svg>
<div style="position:absolute;left:560px;top:655px;width:2px;height:2px;background:#a8a8a8"></div>
<div style="position:absolute;left:560px;top:661px;width:2px;height:2px;background:#a8a8a8"></div>
<div style="position:absolute;left:560px;top:667px;width:2px;height:2px;background:#a8a8a8"></div>
<div style="position:absolute;left:586px;top:652px;width:315px;height:23px;background:#d9d9d9"></div>
<div style="position:absolute;left:586px;top:652px;width:23px;height:23px;background:#fff;border:2px solid #c2c2c2;box-sizing:border-box"></div>
<svg style="position:absolute;left:590px;top:656px;" width="15" height="15" viewBox="0 0 15 15"><path d="M10 2 V13 L4 7.5Z" fill="#6d6d6d"/></svg>
<div style="position:absolute;left:608px;top:652px;width:203px;height:23px;background:#fff;border:2px solid #c2c2c2;box-sizing:border-box"></div>
<div style="position:absolute;left:878px;top:652px;width:23px;height:23px;background:#fff;border:2px solid #c2c2c2;box-sizing:border-box"></div>
<svg style="position:absolute;left:882px;top:656px;" width="15" height="15" viewBox="0 0 15 15"><path d="M5 2 V13 L11 7.5Z" fill="#6d6d6d"/></svg>
<div style="position:absolute;left:466px;top:685px;width:62px;height:27px;background:#cdcdcd"></div>
<svg style="position:absolute;left:484px;top:688px;" width="24" height="24" viewBox="0 0 24 24"><rect x="2.5" y="2.5" width="19" height="19" rx="1" fill="none" stroke="#767676" stroke-width="2"/><path d="M8.8 2 V22 M15.2 2 V22 M2 8.8 H22 M2 15.2 H22" stroke="#767676" stroke-width="1.8"/></svg>
<svg style="position:absolute;left:545px;top:688px;" width="26" height="24" viewBox="0 0 26 24"><rect x="2.5" y="2.5" width="20" height="19" fill="none" stroke="#7a7a7a" stroke-width="2"/><rect x="7" y="6" width="11" height="12" fill="none" stroke="#7a7a7a" stroke-width="1.6"/><path d="M9 9.5 H16 M9 12 H16 M9 14.5 H16" stroke="#7a7a7a" stroke-width="1.4"/></svg>
<svg style="position:absolute;left:606px;top:688px;" width="26" height="24" viewBox="0 0 26 24"><path d="M2.5 2.5 V21.5 H22.5 V2.5" fill="none" stroke="#7a7a7a" stroke-width="2"/><path d="M2.5 2.5 H22.5 M9 2.5 V13 H16 V2.5 M2.5 15.5 H22.5" fill="none" stroke="#7a7a7a" stroke-width="1.8"/></svg>
<div style="position:absolute;left:659px;top:699px;width:12px;height:2px;background:#666"></div>
<div style="position:absolute;left:680px;top:700px;width:152px;height:1px;background:#9a9a9a"></div>
<div style="position:absolute;left:741px;top:693px;width:7px;height:16px;background:#6d6d6d"></div>
<div style="position:absolute;left:756px;top:696px;width:1px;height:8px;background:#9a9a9a"></div>
<div style="position:absolute;left:839px;top:699.5px;width:13px;height:1.5px;background:#666"></div>
<div style="position:absolute;left:844.75px;top:693.5px;width:1.5px;height:13px;background:#666"></div>
<span style="position:absolute;left:872.00px;top:692.18px;font-size:17.5px;line-height:17.5px;letter-spacing:0.000px;color:#444444;white-space:pre;">85%</span>
<div style="position:absolute;left:0px;top:96px;width:1px;height:616px;background:#7aab8f"></div>
<div style="position:absolute;left:1px;top:96px;width:2px;height:141px;background:#fdfbfd"></div>
<div style="position:absolute;left:931px;top:96px;width:2px;height:141px;background:#fdfbfd"></div>
<div style="position:absolute;left:933px;top:96px;width:1px;height:616px;background:#4f8f69"></div>
<div style="position:absolute;left:934px;top:96px;width:1px;height:616px;background:#176b38"></div>
</body></html>
